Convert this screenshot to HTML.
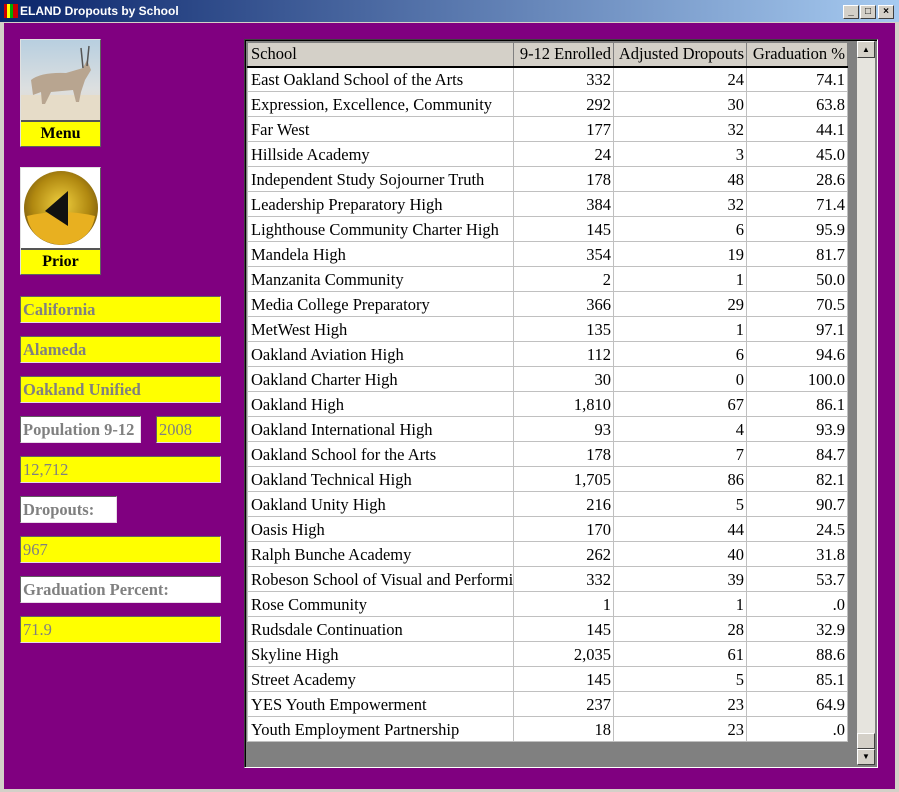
<!DOCTYPE html>
<html><head><style>
*{margin:0;padding:0;box-sizing:border-box}
body{width:899px;height:792px;overflow:hidden;background:#d4d0c8;position:relative;font-family:"Liberation Serif",serif}
.a{position:absolute}
#title{left:0;top:0;width:899px;height:22px;background:linear-gradient(90deg,#0a246a,#a6caf0);color:#fff;font:bold 12px "Liberation Sans",sans-serif;line-height:22px;padding-left:20px}
.wb{top:5px;width:16px;height:14px;background:#d4d0c8;border:1px solid;border-color:#fff #404040 #404040 #fff;font:bold 10px "Liberation Sans";color:#000;text-align:center;line-height:12px}
#client{left:4px;top:23px;width:891px;height:766px;background:#800080}
.fld{position:absolute;height:27px;background:#ffff00;border:1px solid;border-color:#606060 #e8d8e8 #e8d8e8 #606060;color:#808080;font-weight:bold;font-size:16.5px;line-height:26px;padding-left:2px;white-space:nowrap;overflow:hidden}
.w{background:#fff}
.btn{position:absolute;left:20px;width:81px;border:1px solid;border-color:#e0e0e0 #606060 #606060 #e0e0e0;background:#fff}
.btn .lb{position:absolute;left:0;bottom:0;width:79px;height:26px;background:#ffff00;border-top:2px solid #555;text-align:center;font-weight:bold;font-size:16px;line-height:24px}
table{border-collapse:collapse;table-layout:fixed;position:absolute;left:247px;top:42px;font-size:16.5px;width:600px}
td{height:25px;border:1px solid #c0c0c0;padding:0 2px 0 3px;white-space:nowrap;overflow:hidden;background:#fff;line-height:23px}
th{height:24px;background:#d4d0c8;font-weight:normal;text-align:left;padding:0 2px 0 3px;border:1px solid #808080;border-bottom:2px solid #000;white-space:nowrap;overflow:hidden;line-height:22px}
td.n,th.n{text-align:right}
</style></head><body>
<div id="title" class="a">ELAND Dropouts by School</div>
<div class="a" style="left:4px;top:4px;width:14px;height:14px;background:linear-gradient(90deg,#c00 0 3px,#ff0 3px 6px,#0a0 6px 9px,#c00 9px)"></div>
<div class="a wb" style="left:843px">_</div>
<div class="a wb" style="left:860px">□</div>
<div class="a wb" style="left:878px">×</div>
<div id="client" class="a"></div>

<div class="btn" style="top:39px;height:108px">
 <svg width="79" height="80" viewBox="0 0 79 80"><defs><linearGradient id="sk" x1="0" y1="0" x2="0" y2="1"><stop offset="0" stop-color="#b8cfe0"/><stop offset=".6" stop-color="#dcdfe0"/><stop offset="1" stop-color="#e8dcc8"/></linearGradient></defs><rect width="79" height="80" fill="url(#sk)"/><rect y="55" width="79" height="25" fill="#e6dcc8"/><path d="M10 40 Q20 32 45 33 L62 28 L66 20 L70 30 L64 40 L60 52 L58 62 L55 62 L52 50 L30 52 L24 64 L21 64 L20 52 L12 55 Z" fill="#b8a590"/><path d="M62 28 L60 8 M66 26 L68 6" stroke="#555" stroke-width="1.5"/></svg>
 <div class="lb">Menu</div></div>
<div class="btn" style="top:167px;height:108px">
 <svg width="79" height="80" viewBox="0 0 79 80"><defs><radialGradient id="g" cx=".5" cy=".45" r=".55"><stop offset="0" stop-color="#f0d040"/><stop offset=".7" stop-color="#b08810"/><stop offset="1" stop-color="#806010"/></radialGradient></defs><circle cx="40" cy="40" r="37" fill="url(#g)"/><path d="M6 48 Q40 40 74 48 Q70 74 40 77 Q10 74 6 48Z" fill="#e8b020"/><path d="M47 23 L47 58 L24 43 Z" fill="#111"/></svg>
 <div class="lb">Prior</div></div>

<div class="fld" style="left:20px;top:296px;width:201px">California</div>
<div class="fld" style="left:20px;top:336px;width:201px">Alameda</div>
<div class="fld" style="left:20px;top:376px;width:201px">Oakland Unified</div>
<div class="fld w" style="left:20px;top:416px;width:121px">Population 9-12</div>
<div class="fld" style="left:156px;top:416px;width:65px;font-weight:normal">2008</div>
<div class="fld" style="left:20px;top:456px;width:201px;font-weight:normal">12,712</div>
<div class="fld w" style="left:20px;top:496px;width:97px">Dropouts:</div>
<div class="fld" style="left:20px;top:536px;width:201px;font-weight:normal">967</div>
<div class="fld w" style="left:20px;top:576px;width:201px">Graduation Percent:</div>
<div class="fld" style="left:20px;top:616px;width:201px;font-weight:normal">71.9</div>

<div class="a" style="left:244px;top:39px;width:634px;height:729px;background:#808080;border:1px solid;border-color:#404040 #fff #fff #404040;box-shadow:inset 1px 1px 0 #000"></div>
<div class="a" style="left:857px;top:41px;width:18px;height:724px;background:#e6e4de"></div>
<div class="a wb" style="left:857px;top:41px;width:18px;height:17px;font-size:8px;line-height:15px">▲</div>
<div class="a wb" style="left:857px;top:733px;width:18px;height:16px"></div>
<div class="a wb" style="left:857px;top:749px;width:18px;height:16px;font-size:8px;line-height:14px">▼</div>

<table>
<colgroup><col style="width:266px"><col style="width:100px"><col style="width:133px"><col style="width:101px"></colgroup>
<tr><th>School</th><th class="n">9-12 Enrolled</th><th class="n">Adjusted Dropouts</th><th class="n">Graduation %</th></tr>
<tr><td>East Oakland School of the Arts</td><td class="n">332</td><td class="n">24</td><td class="n">74.1</td></tr>
<tr><td>Expression, Excellence, Community</td><td class="n">292</td><td class="n">30</td><td class="n">63.8</td></tr>
<tr><td>Far West</td><td class="n">177</td><td class="n">32</td><td class="n">44.1</td></tr>
<tr><td>Hillside Academy</td><td class="n">24</td><td class="n">3</td><td class="n">45.0</td></tr>
<tr><td>Independent Study Sojourner Truth</td><td class="n">178</td><td class="n">48</td><td class="n">28.6</td></tr>
<tr><td>Leadership Preparatory High</td><td class="n">384</td><td class="n">32</td><td class="n">71.4</td></tr>
<tr><td>Lighthouse Community Charter High</td><td class="n">145</td><td class="n">6</td><td class="n">95.9</td></tr>
<tr><td>Mandela High</td><td class="n">354</td><td class="n">19</td><td class="n">81.7</td></tr>
<tr><td>Manzanita Community</td><td class="n">2</td><td class="n">1</td><td class="n">50.0</td></tr>
<tr><td>Media College Preparatory</td><td class="n">366</td><td class="n">29</td><td class="n">70.5</td></tr>
<tr><td>MetWest High</td><td class="n">135</td><td class="n">1</td><td class="n">97.1</td></tr>
<tr><td>Oakland Aviation High</td><td class="n">112</td><td class="n">6</td><td class="n">94.6</td></tr>
<tr><td>Oakland Charter High</td><td class="n">30</td><td class="n">0</td><td class="n">100.0</td></tr>
<tr><td>Oakland High</td><td class="n">1,810</td><td class="n">67</td><td class="n">86.1</td></tr>
<tr><td>Oakland International High</td><td class="n">93</td><td class="n">4</td><td class="n">93.9</td></tr>
<tr><td>Oakland School for the Arts</td><td class="n">178</td><td class="n">7</td><td class="n">84.7</td></tr>
<tr><td>Oakland Technical High</td><td class="n">1,705</td><td class="n">86</td><td class="n">82.1</td></tr>
<tr><td>Oakland Unity High</td><td class="n">216</td><td class="n">5</td><td class="n">90.7</td></tr>
<tr><td>Oasis High</td><td class="n">170</td><td class="n">44</td><td class="n">24.5</td></tr>
<tr><td>Ralph Bunche Academy</td><td class="n">262</td><td class="n">40</td><td class="n">31.8</td></tr>
<tr><td>Robeson School of Visual and Performing Arts</td><td class="n">332</td><td class="n">39</td><td class="n">53.7</td></tr>
<tr><td>Rose Community</td><td class="n">1</td><td class="n">1</td><td class="n">.0</td></tr>
<tr><td>Rudsdale Continuation</td><td class="n">145</td><td class="n">28</td><td class="n">32.9</td></tr>
<tr><td>Skyline High</td><td class="n">2,035</td><td class="n">61</td><td class="n">88.6</td></tr>
<tr><td>Street Academy</td><td class="n">145</td><td class="n">5</td><td class="n">85.1</td></tr>
<tr><td>YES Youth Empowerment</td><td class="n">237</td><td class="n">23</td><td class="n">64.9</td></tr>
<tr><td>Youth Employment Partnership</td><td class="n">18</td><td class="n">23</td><td class="n">.0</td></tr>
</table>
</body></html>
